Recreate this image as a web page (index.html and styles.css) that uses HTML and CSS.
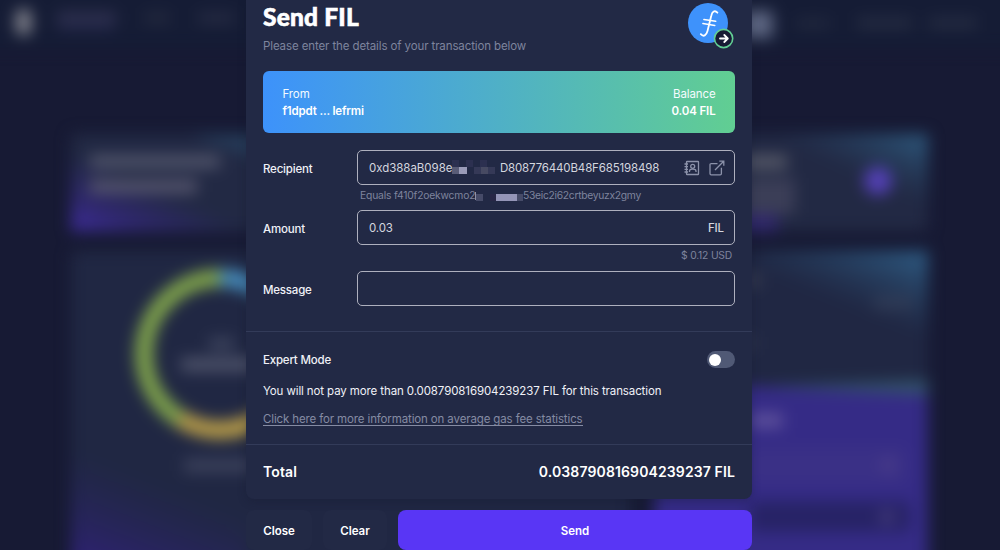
FILE: index.html
```html
<!DOCTYPE html>
<html lang="en">
<head>
<meta charset="utf-8">
<title>Send FIL</title>
<link rel="stylesheet" href="styles.css">
</head>
<body>
<svg class="backdrop" viewBox="0 0 1000 550" aria-hidden="true">
  <defs>
    <filter id="soft" filterUnits="userSpaceOnUse" x="-60" y="-60" width="1120" height="740" color-interpolation-filters="sRGB"><feGaussianBlur stdDeviation="7.4"/></filter>
    <linearGradient id="violet" gradientUnits="userSpaceOnUse" x1="70" y1="236" x2="100" y2="165"><stop stop-color="#422da8"/><stop offset=".45" stop-color="#30286f"/><stop offset="1" stop-color="#30286f" stop-opacity="0"/></linearGradient>
    <linearGradient id="violet2" gradientUnits="userSpaceOnUse" x1="70" y1="580" x2="115" y2="465"><stop stop-color="#322080"/><stop offset="1" stop-color="#2a2465" stop-opacity="0"/></linearGradient>
    <linearGradient id="sky" gradientUnits="userSpaceOnUse" x1="930" y1="130" x2="900" y2="196"><stop stop-color="#306186"/><stop offset="1" stop-color="#28486a" stop-opacity="0"/></linearGradient>
    <linearGradient id="sky2" gradientUnits="userSpaceOnUse" x1="930" y1="250" x2="898" y2="328"><stop stop-color="#30618a"/><stop offset="1" stop-color="#28486a" stop-opacity="0"/></linearGradient>
  </defs>
  <rect width="1000" height="550" fill="#171a34"/>
  <g filter="url(#soft)">
    <rect x="-40" y="-40" width="1080" height="88" fill="#151c35"/>
    <rect x="16" y="9" width="15" height="26" rx="6" fill="#85868f"/>
    <rect x="57" y="12" width="59" height="11" fill="#2f3150"/>
    <rect x="58" y="26" width="56" height="3" fill="#30305f"/>
    <rect x="144" y="13" width="26" height="10" fill="#242a3f"/>
    <rect x="198" y="13" width="36" height="10" fill="#272c44"/>
    <rect x="735" y="11" width="38" height="27" fill="#5c6581"/>
    <rect x="796" y="19" width="34" height="9" fill="#22293f"/>
    <rect x="857" y="18" width="55" height="10" fill="#262d43"/>
    <rect x="929" y="18" width="48" height="10" fill="#262d43"/>
    <rect x="71" y="134" width="405" height="97" rx="5" fill="#222944"/>
    <rect x="71" y="134" width="175" height="97" fill="url(#violet)"/>
    <path d="M190 134H280V168Z" fill="#263b58"/>
    <rect x="90" y="155" width="130" height="13" fill="#50546a"/>
    <rect x="90" y="180" width="107" height="13" fill="#56566e"/>
    <rect x="540" y="134" width="388" height="97" rx="5" fill="#222944"/>
    <rect x="780" y="134" width="148" height="97" fill="url(#sky)"/>
    <rect x="740" y="155" width="47" height="14" fill="#555867"/>
    <rect x="740" y="178" width="55" height="36" fill="#3b3e57"/>
    <rect x="735" y="214" width="43" height="18" fill="#30276b"/>
    <circle cx="878" cy="181" r="14" fill="#5340b4"/>
    <rect x="71" y="251" width="559" height="330" rx="5" fill="#202743"/>
    <rect x="71" y="450" width="175" height="140" fill="url(#violet2)"/>
    <circle cx="220" cy="354" r="76" fill="none" stroke="#80a44b" stroke-width="17.5"/>
    <path d="M220 278A76 76 0 0 1 296 354" fill="none" stroke="#4589b9" stroke-width="17.5"/>
    <path d="M180 418.6A76 76 0 0 0 270 411" fill="none" stroke="#b79b48" stroke-width="17.5"/>
    <rect x="209" y="338" width="25" height="11" fill="#3f465f"/>
    <rect x="181" y="358" width="85" height="13" fill="#4f546b"/>
    <rect x="184" y="459" width="70" height="13" fill="#3c425c"/>
    <rect x="654" y="251" width="274" height="330" rx="5" fill="#202743"/>
    <rect x="760" y="251" width="168" height="100" fill="url(#sky2)"/>
    <rect x="745" y="274" width="15" height="13" fill="#373c50"/>
    <rect x="874" y="297" width="38" height="12" fill="#303b56"/>
    <rect x="742" y="336" width="14" height="14" fill="#2e344b"/>
    <path d="M770 386L928 380V396L770 391Z" fill="#33526c"/>
    <path d="M654 380L752 386L928 395V590H654Z" fill="#352b86"/>
    <rect x="750" y="413" width="33" height="15" fill="#5c4f9b"/>
    <rect x="750" y="447" width="157" height="37" rx="6" fill="#3a3086"/>
    <rect x="750" y="501" width="160" height="31" rx="6" fill="#272366"/>
    <circle cx="888" cy="465" r="8" fill="#483b89"/>
    <circle cx="887" cy="517" r="8" fill="#40387a"/>
  </g>
</svg>
<main class="dialog">
  <section class="card">
    <header class="head">
      <div>
        <h1>Send FIL</h1>
        <p class="t-sub">Please enter the details of your transaction below</p>
      </div>
      <svg class="coin" viewBox="0 0 48 50">
        <circle cx="21" cy="23" r="20" fill="#3e92fb"/>
        <path d="M30.4 12.7C27.8 9.8 25.2 11.5 24.2 16L20.5 31C19.3 35.5 16.6 37.2 13.8 34.2" fill="none" stroke="#fff" stroke-width="1.8" stroke-linecap="round"/>
        <path d="M16.9 19.6L28.7 21.3M15.9 23.6L27.8 25.4" stroke="#fff" stroke-width="1.5" stroke-linecap="round"/>
        <circle cx="36.6" cy="38.5" r="9.1" fill="#171a34" stroke="#62ce94" stroke-width="1.6"/>
        <path d="M33 38.5H40.4M37.3 35L40.8 38.5L37.3 42" fill="none" stroke="#fff" stroke-width="1.8" stroke-linecap="round" stroke-linejoin="round"/>
      </svg>
    </header>
    <div class="account">
      <div><p>From</p><b>f1dpdt ... lefrmi</b></div>
      <div class="right"><p>Balance</p><b>0.04 FIL</b></div>
    </div>
    <div class="field">
      <label>Recipient</label>
      <div class="input">
        <span class="addr-a">0xd388aB098e</span>
        <svg class="mosaic" viewBox="0 0 49 15"><path fill="#2c3050" d="M0 0H7V7H0zM14 0H21V7H14zM28 0H35V7H28z"/><path fill="#595c77" d="M0 7H7V14H0z"/><path fill="#9a9bb8" d="M7 7H15V14H7z"/><path fill="#353957" d="M22 7H29V14H22zM36 7H43V14H36z"/><path fill="#474a62" d="M29 7H36V14H29z"/></svg>
        <span class="addr-b">D808776440B48F685198498</span>
        <svg class="contact" viewBox="0 0 16 16"><g fill="none" stroke="#8c92aa" stroke-width="1.3"><rect x="2.5" y="1.5" width="12" height="13" rx=".6"/><path d="M.5 4H4M.5 6.7H4M.5 9.4H4M.5 12H4"/><circle cx="8.7" cy="6.3" r="2"/><path d="M5.5 12V11Q5.5 9.2 8.7 9.2T12 11V12"/></g></svg>
        <svg class="open" viewBox="0 0 16 16"><path fill="none" stroke="#8c92aa" stroke-width="1.3" d="M8.5 3.6H2.2Q1 3.6 1 4.8V13.6Q1 14.8 2.2 14.8H11.2Q12.4 14.8 12.4 13.6V7.8M6 10L14.7 1.3M10.3 1.2H14.8V5.7"/></svg>
      </div>
    </div>
    <div class="hint">
      <span class="hint-a">Equals f410f2oekwcmo2</span>
      <svg class="mosaic-small" viewBox="0 0 48 12"><path fill="#8c90a8" d="M0 1H1V9H0z"/><path fill="#464b68" d="M1 3H8V10H1zM42 3H48V10H42z"/><path fill="#282746" d="M15 3H21V10H15z"/><path fill="#9495b7" d="M21 3H42V10H21z"/></svg>
      <span class="hint-b">53eic2i62crtbeyuzx2gmy</span>
    </div>
    <div class="field">
      <label>Amount</label>
      <div class="input amount"><span>0.03</span><span class="unit">FIL</span></div>
    </div>
    <div class="usd">$ 0.12 USD</div>
    <div class="field">
      <label>Message</label>
      <div class="input"></div>
    </div>
    <div class="fees">
      <div class="expert"><span>Expert Mode</span><i class="switch"></i></div>
      <p class="limit">You will not pay more than 0.008790816904239237 FIL for this transaction</p>
      <p><a class="link">Click here for more information on average gas fee statistics</a></p>
    </div>
    <div class="total"><span>Total</span><span class="sum">0.038790816904239237 FIL</span></div>
  </section>
  <footer class="actions">
    <button>Close</button><button>Clear</button><button class="send">Send</button>
  </footer>
</main>
</body>
</html>
```
FILE: styles.css
```css
* { box-sizing: border-box; }
body { margin: 0; height: 550px; overflow: hidden; background: #171a34; font-family: Inter, "Liberation Sans", sans-serif; font-size: 11.5px; letter-spacing: -.11px; color: #f0f1f7; }
p, h1 { margin: 0; font-weight: 400; }
svg { display: block; flex: none; }
.backdrop { position: absolute; inset: 0; width: 1000px; height: 550px; }
.dialog { position: relative; width: 506px; margin-left: 246px; }
.card { height: 498.5px; padding: 0 17px; border-radius: 0 0 8px 8px; background: #222945; box-shadow: 0 3px 9px rgba(21, 26, 48, .3); }
.head { display: flex; justify-content: space-between; height: 71px; }
h1 { height: 37px; font: 900 24.5px/34px Lato, sans-serif; letter-spacing: .2px; -webkit-text-stroke: .6px #fff; color: #fff; white-space: nowrap; }
.t-sub { line-height: 18px; color: #7e849d; white-space: nowrap; }
.coin { width: 48px; height: 50px; }
.account { display: flex; justify-content: space-between; height: 62px; padding: 15px 19.5px 13px; border-radius: 6px; background: linear-gradient(90deg, #3d92fb, #61ce92); line-height: 17px; color: #f4fbff; margin-bottom: 16.5px; }
.account b { display: block; font-weight: 600; letter-spacing: -.15px; color: #fff; }
.right { text-align: right; }
.field { display: grid; grid-template-columns: 94.4px minmax(0, 1fr); height: 35.5px; align-items: center; font-weight: 500; letter-spacing: -.2px; }
.field label { padding-top: 3px; }
.input { display: flex; align-items: center; height: 35.5px; padding: 1px 10px 0 10.5px; border: 1.2px solid #aeb0be; border-radius: 5px; font-weight: 400; letter-spacing: -.11px; white-space: nowrap; color: #d4d6df; }
.addr-a { flex: none; width: 83px; letter-spacing: -.02px; }
.mosaic { width: 49px; height: 15px; }
.addr-b { flex: none; width: 159px; margin-left: -1px; letter-spacing: -.15px; }
.contact { width: 16px; height: 16px; margin-left: 25px; }
.open { width: 16px; height: 16px; margin-left: 9px; }
.hint { display: flex; align-items: center; height: 24.5px; padding: 0 0 5px 97px; font-size: 10.3px; letter-spacing: -.18px; color: #7e849d; white-space: nowrap; }
.hint-a { flex: none; width: 115px; }
.hint-b { letter-spacing: -.29px; }
.mosaic-small { width: 48px; height: 12px; margin-top: 5px; }
.amount { justify-content: space-between; padding-top: 2px; }
.unit { font-weight: 500; }
.usd { height: 25.5px; padding: 3px 3px 0; font-size: 10.3px; line-height: 14px; letter-spacing: -.2px; text-align: right; color: #7e849d; }
.fees { height: 114px; margin: 24.5px -17px 0; padding: 18px 17px 0; border-top: 1px solid #333b59; border-bottom: 1px solid #333b59; line-height: 20px; letter-spacing: -.11px; white-space: nowrap; }
.expert { display: flex; justify-content: space-between; align-items: center; height: 20px; margin-bottom: 11px; font-weight: 500; letter-spacing: -.2px; }
.switch { display: flex; align-items: center; width: 28px; height: 17px; padding-left: 2px; border-radius: 9px; background: #505975; }
.switch::before { content: ""; width: 12px; height: 12px; border-radius: 50%; background: #fff; }
.limit { margin-bottom: 8px; }
.link { display: inline-block; height: 16px; line-height: 18px; border-bottom: 1px solid #858ba3; color: #858ba3; letter-spacing: -.13px; }
.total { display: flex; justify-content: space-between; align-items: center; height: 54px; font-size: 14px; font-weight: 600; letter-spacing: .12px; color: #fff; }
.actions { display: grid; grid-template-columns: 66px 64px 354px; gap: 11px; height: 40px; margin-top: 11.5px; }
button { padding: 1px 0 0; border: 0; border-radius: 8px; background: #222945; color: #fff; font: 600 11.5px Inter, sans-serif; }
.send { background: #5936f5; }
```
